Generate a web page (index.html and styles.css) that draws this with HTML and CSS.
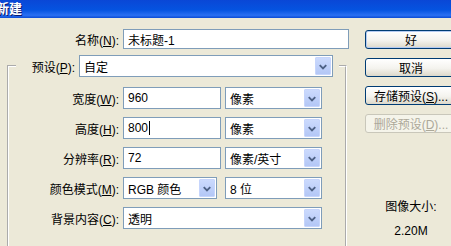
FILE: index.html
```html
<!DOCTYPE html>
<html lang="zh-CN">
<head>
    <meta charset="UTF-8">
    <meta name="viewport" content="width=device-width, initial-scale=1.0">
    <title>新建</title>
    <link rel="stylesheet" href="styles.css">
</head>
<body>
    <div class="titlebar"><span class="title">新建</span></div>

    <div class="dialog">
        <div class="form">
            <div class="row name-row">
                <label class="lbl">名称(<u>N</u>):</label>
                <div class="field name-field">未标题-1</div>
            </div>

            <fieldset class="group">
                <legend class="preset">
                    <label class="lbl-preset">预设(<u>P</u>):</label>
                    <div class="combo preset-combo">
                        <span class="val">自定</span>
                        <span class="drop"><svg width="15" height="17" viewBox="0 0 15 17"><polyline points="4,7 7.5,10.5 11,7" fill="none" stroke="#4d6185" stroke-width="2"/></svg></span>
                    </div>
                </legend>

                <div class="row">
                    <label class="lbl">宽度(<u>W</u>):</label>
                    <div class="field num-field">960</div>
                    <div class="combo unit-combo">
                        <span class="val">像素</span>
                        <span class="drop"><svg width="15" height="17" viewBox="0 0 15 17"><polyline points="4,7 7.5,10.5 11,7" fill="none" stroke="#4d6185" stroke-width="2"/></svg></span>
                    </div>
                </div>
                <div class="row">
                    <label class="lbl">高度(<u>H</u>):</label>
                    <div class="field num-field">800<span class="caret"></span></div>
                    <div class="combo unit-combo">
                        <span class="val">像素</span>
                        <span class="drop"><svg width="15" height="17" viewBox="0 0 15 17"><polyline points="4,7 7.5,10.5 11,7" fill="none" stroke="#4d6185" stroke-width="2"/></svg></span>
                    </div>
                </div>
                <div class="row">
                    <label class="lbl">分辨率(<u>R</u>):</label>
                    <div class="field num-field">72</div>
                    <div class="combo unit-combo">
                        <span class="val">像素/英寸</span>
                        <span class="drop"><svg width="15" height="17" viewBox="0 0 15 17"><polyline points="4,7 7.5,10.5 11,7" fill="none" stroke="#4d6185" stroke-width="2"/></svg></span>
                    </div>
                </div>
                <div class="row">
                    <label class="lbl">颜色模式(<u>M</u>):</label>
                    <div class="combo mode-combo">
                        <span class="val">RGB 颜色</span>
                        <span class="drop"><svg width="15" height="17" viewBox="0 0 15 17"><polyline points="4,7 7.5,10.5 11,7" fill="none" stroke="#4d6185" stroke-width="2"/></svg></span>
                    </div>
                    <div class="combo bits-combo">
                        <span class="val">8 位</span>
                        <span class="drop"><svg width="15" height="17" viewBox="0 0 15 17"><polyline points="4,7 7.5,10.5 11,7" fill="none" stroke="#4d6185" stroke-width="2"/></svg></span>
                    </div>
                </div>
                <div class="row">
                    <label class="lbl">背景内容(<u>C</u>):</label>
                    <div class="combo bg-combo">
                        <span class="val">透明</span>
                        <span class="drop"><svg width="15" height="17" viewBox="0 0 15 17"><polyline points="4,7 7.5,10.5 11,7" fill="none" stroke="#4d6185" stroke-width="2"/></svg></span>
                    </div>
                </div>
            </fieldset>
        </div>

        <div class="actions">
            <button class="btn default">好</button>
            <button class="btn">取消</button>
            <button class="btn">存储预设(<u>S</u>)...</button>
            <button class="btn" disabled>删除预设(<u>D</u>)...</button>

            <div class="info">
                <div class="info-label">图像大小:</div>
                <div class="info-value">2.20M</div>
            </div>
        </div>
    </div>
</body>
</html>
```

FILE: styles.css
```css
html, body {
    height: 246px;
}

body {
    margin: 0;
    padding: 0;
    overflow: hidden;
    background-color: #ece9d8;
    font-family: "Liberation Sans", "Noto Sans CJK SC", sans-serif;
    font-size: 12px;
    color: #000;
}

.titlebar {
    height: 18px;
    background: linear-gradient(#0a47d6, #0553e0 55%, #2a70f2 85%, #0b4bd4);
    overflow: hidden;
}

.title {
    display: block;
    text-indent: -4px;
    line-height: 17px;
    font-size: 13px;
    font-weight: bold;
    color: #fff;
    text-shadow: 1px 1px 0 #0a1a6e;
}

.dialog {
    display: flex;
    padding-top: 11px;
}

.form {
    width: 349px;
    flex-shrink: 0;
}

.row {
    display: flex;
    align-items: center;
    height: 22px;
    margin-bottom: 8px;
}

.name-row {
    height: 20px;
    margin-bottom: 0;
}

.lbl {
    width: 119px;
    margin-right: 4px;
    text-align: right;
    white-space: nowrap;
}

.group .lbl {
    width: 110px;
}

.field {
    box-sizing: border-box;
    height: 100%;
    display: flex;
    align-items: center;
    padding-left: 4px;
    border: 1px solid #7f9db9;
    background-color: #fff;
    white-space: nowrap;
}

.name-field {
    width: 226px;
}

.num-field {
    width: 98px;
    margin-right: 4px;
}

.caret {
    display: inline-block;
    width: 1px;
    height: 14px;
    margin-left: 1px;
    background-color: #000;
}

.group {
    box-sizing: border-box;
    width: 340px;
    margin: 6px 0 0 7px;
    padding: 14px 0 20px 0;
    border: 2px groove #fff;
}

.preset {
    display: flex;
    align-items: center;
    margin-left: 7px;
    margin-bottom: -4px;
    padding: 0 6px 0 13px;
}

.lbl-preset {
    width: 46px;
    margin-right: 4px;
    text-align: right;
    white-space: nowrap;
}

.combo {
    box-sizing: border-box;
    height: 22px;
    display: flex;
    padding: 1px;
    border: 1px solid #7f9db9;
    background-color: #fff;
}

.combo .val {
    flex: 1;
    display: flex;
    align-items: center;
    padding-left: 3px;
    white-space: nowrap;
    overflow: hidden;
}

.combo .drop {
    box-sizing: border-box;
    width: 16px;
    display: flex;
    align-items: center;
    justify-content: center;
    border: 1px solid #c6d5fc;
    border-radius: 1px;
    background: linear-gradient(#cbdafd, #b3c7f6);
}

.preset-combo {
    width: 254px;
}

.unit-combo {
    width: 97px;
}

.mode-combo {
    width: 94px;
    margin-right: 8px;
}

.bits-combo {
    width: 97px;
}

.bg-combo {
    width: 199px;
}

.actions {
    width: 92px;
    flex-shrink: 0;
    margin-left: 16px;
    padding-top: 1px;
    display: flex;
    flex-direction: column;
}

.btn {
    box-sizing: border-box;
    height: 19px;
    margin: 0 0 9px 0;
    padding: 0;
    border: 1px solid #003c74;
    border-radius: 3px;
    background: linear-gradient(#ffffff, #f4f3ee 55%, #dcd8ca);
    font-family: inherit;
    font-size: 12px;
    color: #000;
    white-space: nowrap;
    overflow: hidden;
}

.btn.default {
    box-shadow: inset 0 0 0 1px #b4cbf2;
}

.btn:disabled {
    border-color: #c9c7ba;
    background: #f5f4ea;
    color: #aca899;
}

.info {
    margin-top: 58px;
    text-align: center;
    line-height: 14px;
}

.info-value {
    margin-top: 10px;
}
```
